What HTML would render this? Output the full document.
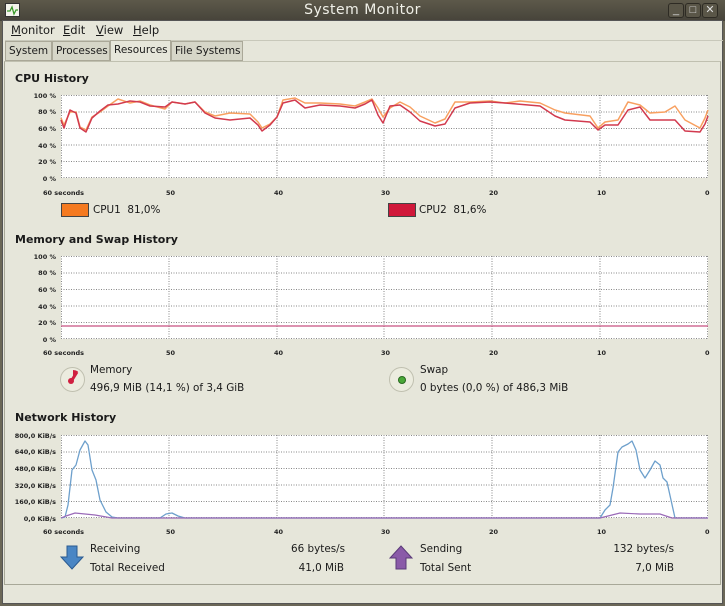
<!DOCTYPE html>
<html><head><meta charset="utf-8"><style>
*{margin:0;padding:0;box-sizing:border-box}
body{width:725px;height:606px;background:#6b6757;font-family:"Liberation Sans","DejaVu Sans",sans-serif;font-size:12px;color:#1a1a1a;position:relative;overflow:hidden}
.win{position:absolute;left:2px;top:20px;width:721px;height:584px;background:#e6e6da;border:1px solid #555}
.title{position:absolute;left:0;top:0;width:725px;height:21px;background:linear-gradient(#5d594a,#46433a);color:#f0f0e8;font-size:14px;text-align:center;line-height:21px;letter-spacing:.5px;font-family:"DejaVu Sans",sans-serif}
.ab{position:absolute;font-size:11.5px;font-family:"DejaVu Sans",sans-serif;white-space:nowrap}
.t{position:absolute;white-space:nowrap}
.h{position:absolute;font-weight:bold;font-size:11px;font-family:"DejaVu Sans",sans-serif;white-space:nowrap}
.tab{position:absolute;top:41px;height:20px;background:#d6d6c8;border:1px solid #aaa898;font-family:"DejaVu Sans",sans-serif;font-size:10.5px;line-height:18px;padding:0 3px;white-space:nowrap;overflow:hidden}
.wb{position:absolute;top:3px;width:16px;height:15px;border:1px solid #2e2b24;border-radius:3px;background:#5a5648;color:#ddd;font-size:11px;text-align:center;line-height:13px}
.s{font-family:"DejaVu Sans",sans-serif;font-size:10.4px}
</style></head><body>
<div class="title">System Monitor</div>
<div style="position:absolute;left:5px;top:3px;width:15px;height:14px;background:#f4f4ec;border:1px solid #333"><svg width="13" height="12"><polyline points="1,7 4,7 6,3 8,10 10,6 12,6" fill="none" stroke="#3a9a2a" stroke-width="1.3"/></svg></div>
<div class="wb" style="left:668px">_</div><div class="wb" style="left:685px">□</div><div class="wb" style="left:702px">✕</div>
<div class="win"></div>
<div class="ab" style="left:11px;top:23px"><u>M</u>onitor</div>
<div class="ab" style="left:63px;top:23px"><u>E</u>dit</div>
<div class="ab" style="left:96px;top:23px"><u>V</u>iew</div>
<div class="ab" style="left:133px;top:23px"><u>H</u>elp</div>
<div style="position:absolute;left:5px;top:40px;width:718px;height:1px;background:#c8c8ba"></div>
<div class="tab" style="left:5px;width:47px">System</div>
<div class="tab" style="left:52px;width:58px">Processes</div>
<div class="tab" style="left:110px;top:40px;height:22px;width:61px;background:#e6e6da;border-bottom:none">Resources</div>
<div class="tab" style="left:171px;width:72px">File Systems</div>
<div style="position:absolute;left:4px;top:61px;width:717px;height:524px;border:1px solid #a8a898;border-top-color:#c0c0b0"></div>

<div class="h" style="left:15px;top:72px">CPU History</div>
<div class="h" style="left:15px;top:233px">Memory and Swap History</div>
<div class="h" style="left:15px;top:411px">Network History</div>

<svg style="position:absolute;left:0;top:0" width="725" height="606" font-family="DejaVu Sans" font-size="6.5" font-weight="bold" fill="#222">
<defs><g id="grid" stroke="#888" stroke-width="1" stroke-dasharray="1,1.5" fill="none">
<rect x="0" y="0" width="647" height="83" fill="#fff" stroke="none"/>
<line x1="0" y1="0.5" x2="647" y2="0.5"/><line x1="0" y1="17" x2="647" y2="17"/><line x1="0" y1="33.5" x2="647" y2="33.5"/><line x1="0" y1="50" x2="647" y2="50"/><line x1="0" y1="66.5" x2="647" y2="66.5"/><line x1="0" y1="82.5" x2="647" y2="82.5"/>
<line x1="0.5" y1="0" x2="0.5" y2="83"/><line x1="108" y1="0" x2="108" y2="83"/><line x1="216" y1="0" x2="216" y2="83"/><line x1="323" y1="0" x2="323" y2="83"/><line x1="431" y1="0" x2="431" y2="83"/><line x1="539" y1="0" x2="539" y2="83"/><line x1="646.5" y1="0" x2="646.5" y2="83"/>
</g>
<g id="xl"><text x="-18" y="0">60 seconds</text><text x="105" y="0">50</text><text x="213" y="0">40</text><text x="320" y="0">30</text><text x="428" y="0">20</text><text x="536" y="0">10</text><text x="644" y="0">0</text></g></defs>
<use href="#grid" x="61" y="95"/><use href="#grid" x="61" y="256"/><use href="#grid" x="61" y="435"/>
<use href="#xl" x="61" y="195"/><use href="#xl" x="61" y="355"/><use href="#xl" x="61" y="534"/>
<g text-anchor="end">
<text x="56" y="98">100 %</text><text x="56" y="114">80 %</text><text x="56" y="131">60 %</text><text x="56" y="148">40 %</text><text x="56" y="164">20 %</text><text x="56" y="181">0 %</text>
<text x="56" y="259">100 %</text><text x="56" y="275">80 %</text><text x="56" y="292">60 %</text><text x="56" y="309">40 %</text><text x="56" y="325">20 %</text><text x="56" y="342">0 %</text>
<text x="56" y="438">800,0 KiB/s</text><text x="56" y="454">640,0 KiB/s</text><text x="56" y="471">480,0 KiB/s</text><text x="56" y="488">320,0 KiB/s</text><text x="56" y="504">160,0 KiB/s</text><text x="56" y="521">0,0 KiB/s</text>
</g>
<polyline fill="none" stroke="#f8a060" stroke-width="1.5" stroke-linejoin="round" points="61,118 64,125 70,112 76,112 80,127 86,130 92,117 100,112 108,106 118,99 130,103 140,101 150,105 165,109 172,102 185,104 195,102 205,112 215,116 230,113 250,114 258,122 262,128 270,124 277,117 283,100 295,98 305,103 320,103 340,104 355,106 365,102 372,99 378,108 383,117 390,108 400,102 410,107 420,116 435,123 445,119 455,102 470,102 490,101 505,103 520,101 540,103 555,110 565,113 590,116 598,128 605,122 618,120 628,102 640,105 650,113 665,112 675,106 685,120 700,128 705,118 708,110"/>
<polyline fill="none" stroke="#d23a4e" stroke-width="1.5" stroke-linejoin="round" points="61,120 64,128 70,110 76,113 80,128 86,132 92,118 100,111 108,105 118,104 130,101 140,102 150,106 165,107 172,102 185,104 195,102 205,113 215,118 230,120 250,118 258,125 262,131 270,125 277,117 283,103 295,100 305,108 320,105 340,106 355,108 365,104 372,100 378,115 383,123 390,106 400,105 410,112 420,121 435,126 445,124 455,108 470,103 490,102 505,103 540,106 555,116 565,120 590,122 598,130 605,125 618,125 628,110 640,107 650,120 665,120 675,120 685,131 700,132 705,124 708,116"/>
<line x1="61" y1="326" x2="708" y2="326" stroke="#c85080" stroke-width="1.3"/>
<polyline fill="none" stroke="#6ea0cc" stroke-width="1.3" stroke-linejoin="round" points="61,518 65,517 68,505 72,470 76,465 80,450 85,441 88,445 92,470 96,480 100,500 106,512 112,517 118,518 160,518 166,514 172,513 178,516 185,518 600,518 605,510 610,505 613,488 618,452 622,447 628,444 632,441 636,450 640,470 645,478 650,470 655,461 660,465 663,478 667,482 671,500 675,518 708,518"/>
<polyline fill="none" stroke="#9a6ab8" stroke-width="1.2" points="61,518 66,516 75,513 95,515 112,518 600,518 612,515 620,513 640,514 660,514 672,518 708,518"/>
</svg>

<div style="position:absolute;left:61px;top:203px;width:28px;height:14px;background:#f57a20;border:1px solid #444"></div>
<div class="t s" style="left:93px;top:204px">CPU1&nbsp; 81,0%</div>
<div style="position:absolute;left:388px;top:203px;width:28px;height:14px;background:#d0183a;border:1px solid #444"></div>
<div class="t s" style="left:419px;top:204px">CPU2&nbsp; 81,6%</div>

<div style="position:absolute;left:60px;top:367px;width:25px;height:25px;border-radius:50%;border:1px solid #c0c0b0;background:#ececdf"></div>
<svg style="position:absolute;left:60px;top:367px" width="26" height="26"><path d="M13,13 L13,3 A10,10 0 0 1 18,4.5 Z" fill="#d02040"/><circle cx="11" cy="14" r="3" fill="#d02040"/><path d="M12,13 L17,5" stroke="#d02040" stroke-width="3"/></svg>
<div class="t s" style="left:90px;top:364px">Memory</div>
<div class="t s" style="left:90px;top:382px">496,9 MiB (14,1 %) of 3,4 GiB</div>
<div style="position:absolute;left:389px;top:367px;width:25px;height:25px;border-radius:50%;border:1px solid #c0c0b0;background:#ececdf"></div>
<div style="position:absolute;left:398px;top:376px;width:8px;height:8px;border-radius:50%;background:#4aa838;border:1px solid #2a6a20"></div>
<div class="t s" style="left:420px;top:364px">Swap</div>
<div class="t s" style="left:420px;top:382px">0 bytes (0,0 %) of 486,3 MiB</div>

<svg style="position:absolute;left:60px;top:545px" width="24" height="26"><path d="M7,1 H17 V12 H23 L12,24 L1,12 H7 Z" fill="#4a86c4" stroke="#2a5a90"/></svg>
<div class="t s" style="left:90px;top:543px">Receiving</div>
<div class="t s" style="left:90px;top:562px">Total Received</div>
<div class="t s" style="left:291px;top:543px;width:53px;text-align:right;left:291px">66 bytes/s</div>
<div class="t s" style="left:290px;top:562px;width:54px;text-align:right">41,0 MiB</div>
<svg style="position:absolute;left:389px;top:545px" width="24" height="26"><path d="M7,24 H17 V13 H23 L12,1 L1,13 H7 Z" fill="#8a5aa8" stroke="#5a3a78"/></svg>
<div class="t s" style="left:420px;top:543px">Sending</div>
<div class="t s" style="left:420px;top:562px">Total Sent</div>
<div class="t s" style="left:600px;top:543px;width:74px;text-align:right">132 bytes/s</div>
<div class="t s" style="left:600px;top:562px;width:74px;text-align:right">7,0 MiB</div>
</body></html>
